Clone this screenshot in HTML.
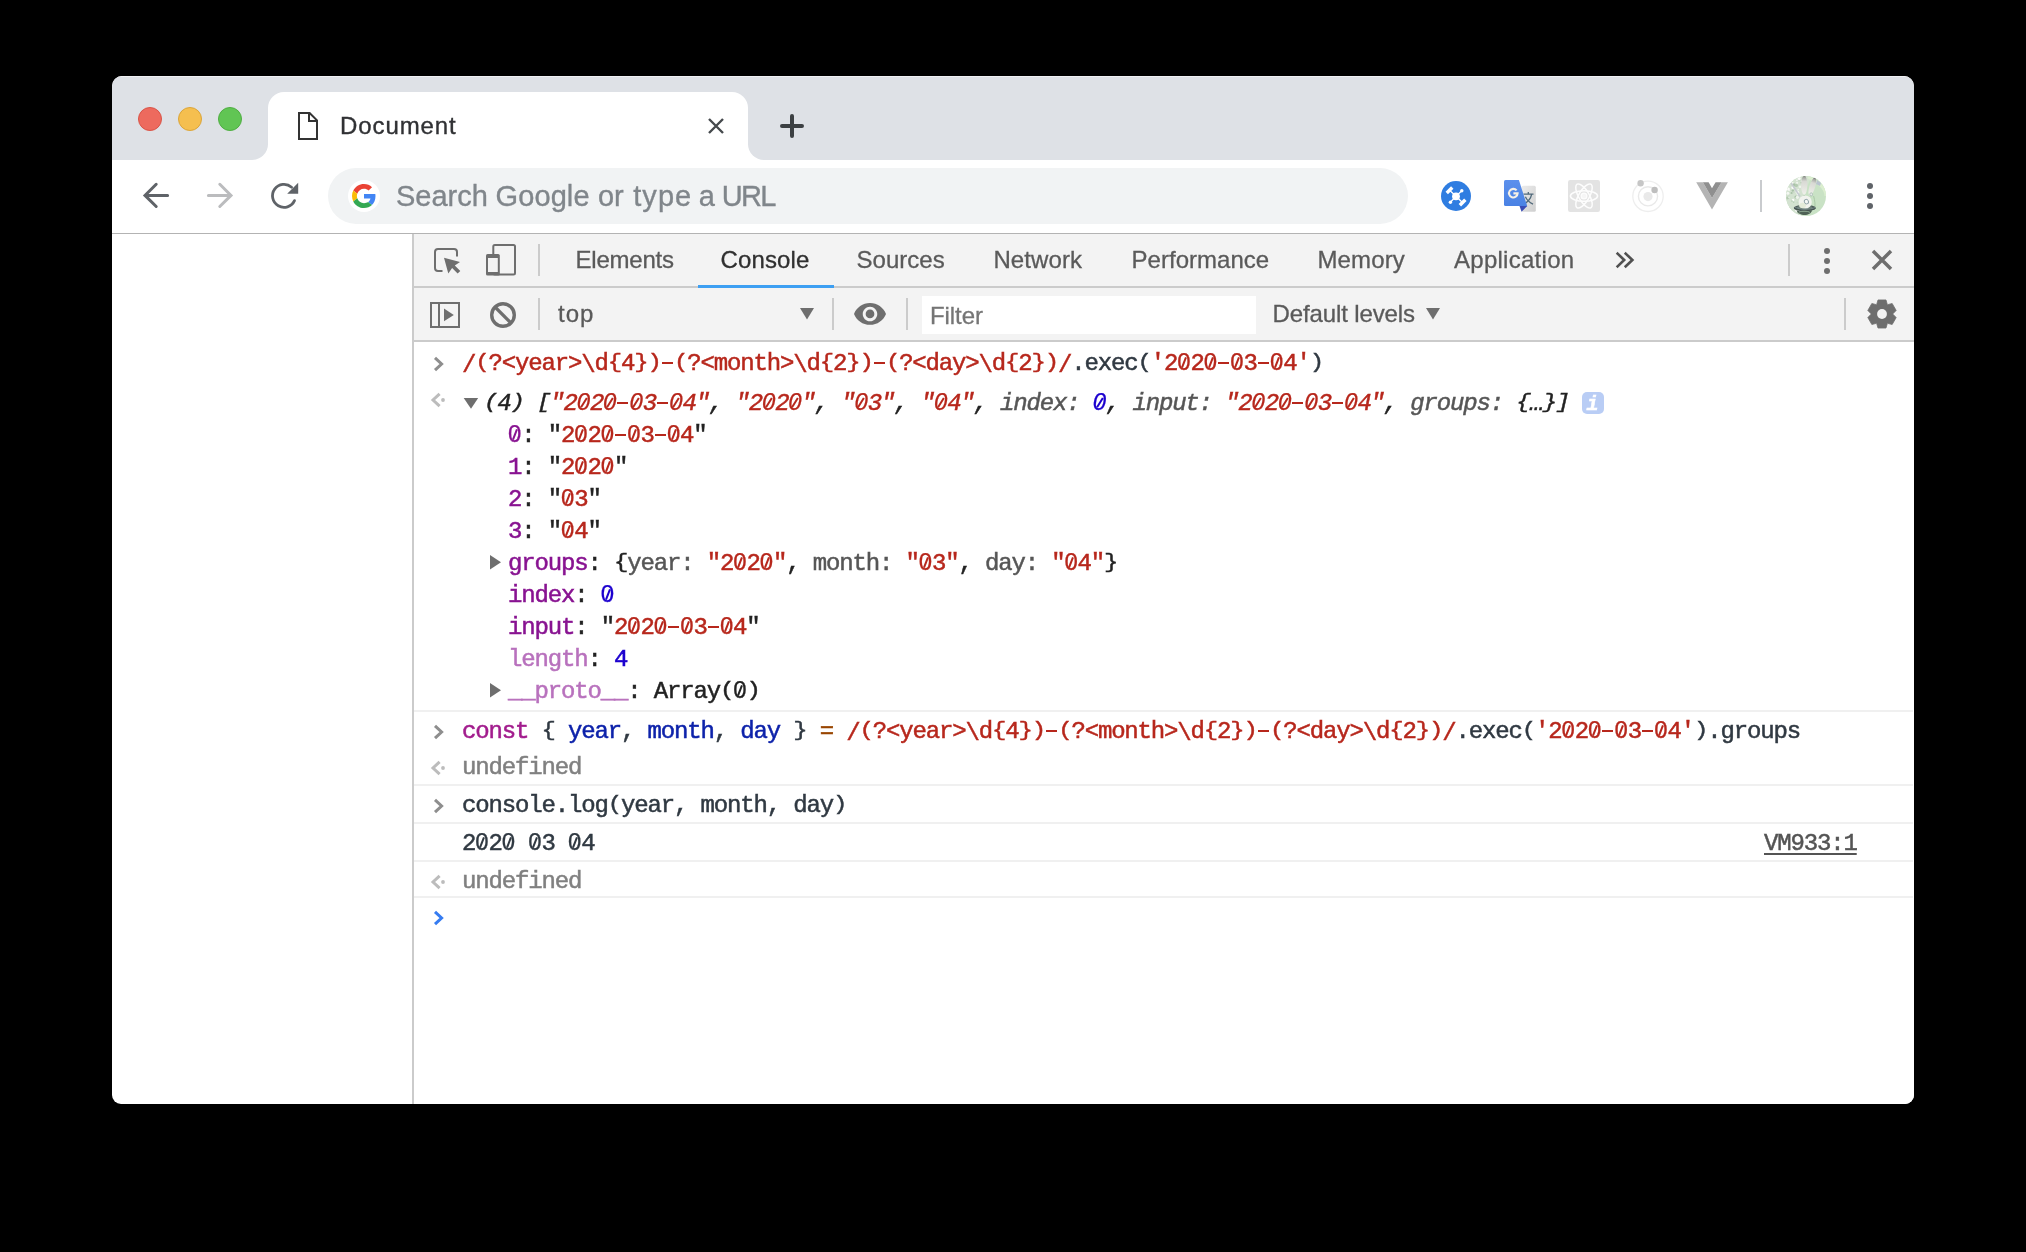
<!DOCTYPE html>
<html>
<head>
<meta charset="utf-8">
<title>Document</title>
<style>
html,body{margin:0;padding:0;background:#000;}
body{width:2026px;height:1252px;overflow:hidden;position:relative;font-family:"Liberation Sans",sans-serif;}
.abs{position:absolute;}
#win{position:absolute;left:112px;top:76px;width:1802px;height:1028px;border-radius:10px 10px 9px 9px;overflow:hidden;background:#fff;}
/* coordinates inside #win are page coords minus (112,76); use #page wrapper shifted */
#page{position:absolute;left:-112px;top:-76px;width:2026px;height:1252px;will-change:transform;}
#tabstrip{position:absolute;left:112px;top:76px;width:1802px;height:84px;background:#dee1e6;box-shadow:inset 0 1px 0 rgba(255,255,255,.55);}
#tab{position:absolute;left:268px;top:92px;width:480px;height:68px;background:#fff;border-radius:16px 16px 0 0;}
.flare{position:absolute;top:144px;width:16px;height:16px;background:#fff;}
.flare i{position:absolute;left:0;top:0;width:16px;height:16px;background:#dee1e6;display:block;}
#toolbar{position:absolute;left:112px;top:160px;width:1802px;height:73px;background:#fff;}
#tbline{position:absolute;left:112px;top:233px;width:1802px;height:1px;background:#b3b3b3;}
#omni{position:absolute;left:328px;top:168px;width:1080px;height:56px;border-radius:28px;background:#f1f3f4;}
.t{position:absolute;white-space:pre;line-height:1;}
.dot{position:absolute;width:24px;height:24px;border-radius:50%;top:107px;box-sizing:border-box;}
/* devtools */
#dt{position:absolute;left:414px;top:234px;width:1500px;height:870px;background:#fff;}
#dtborder{position:absolute;left:412px;top:234px;width:2px;height:870px;background:#cbcbcb;}
#dttabs{position:absolute;left:414px;top:234px;width:1500px;height:52px;background:#f3f3f3;}
.hline{position:absolute;left:414px;width:1500px;height:2px;background:#cbcbcb;}
#dttool{position:absolute;left:414px;top:288px;width:1500px;height:52px;background:#f3f3f3;}
.vsep{position:absolute;width:2px;height:32px;background:#cbcbcb;}
.lab{position:absolute;white-space:pre;font-size:24px;line-height:28px;color:#5a5a5a;-webkit-text-stroke:0.3px currentColor;}
.mono{position:absolute;white-space:pre;font-family:"Liberation Mono",monospace;font-size:24px;letter-spacing:-1.157px;line-height:32px;height:32px;color:#222;-webkit-text-stroke:0.5px currentColor;}
.hy{display:inline-block;width:11px;height:2px;margin:0 1.12px;background:currentColor;vertical-align:5.8px;}
.z{display:inline-block;position:relative;width:13.243px;text-align:center;letter-spacing:0;font-weight:normal;font-family:"Liberation Sans",sans-serif;font-size:24px;line-height:20px;-webkit-text-stroke:0.25px currentColor;}
.z::after{content:"";position:absolute;left:50%;top:50%;width:1.5px;height:11px;margin:-5.5px 0 0 -0.75px;background:currentColor;transform:rotate(21deg);}
.it .z::after{transform:rotate(32deg);}
.q{display:inline-block;text-decoration:none;transform-origin:0 22.4px;transform:translateY(-2px) scaleY(0.86);}
.sl{position:relative;top:2px;text-decoration:none;}
.sepl{position:absolute;left:414px;width:1499px;height:2px;background:#f0f0f0;}
.r{color:#b7271c}.p{color:#881391}.pd{color:#b871bd}.b{color:#1c00cf}.k{color:#a21c8d}.v{color:#0d22aa}.g{color:#808080}.d{color:#565656}.s{color:#303942}.o{color:#994500}
.it{font-style:italic}
svg{position:absolute;overflow:visible}
</style>
</head>
<body>
<div id="win"><div id="page">

<!-- ===== tab strip ===== -->
<div id="tabstrip"></div>
<div class="dot" style="left:138px;background:#ed6a5e;border:1px solid #d95448;"></div>
<div class="dot" style="left:178px;background:#f5bf4f;border:1px solid #dba53a;"></div>
<div class="dot" style="left:218px;background:#61c554;border:1px solid #4fae42;"></div>
<div class="flare" style="left:252px"><i style="border-radius:0 0 16px 0"></i></div>
<div class="flare" style="left:748px"><i style="border-radius:0 0 0 16px"></i></div>
<div id="tab"></div>
<svg style="left:0;top:0" width="2026" height="260" viewBox="0 0 2026 260">
<!-- favicon -->
<path d="M299,113 H309.6 L317,120.4 V139 H299 Z M309,113 V121 H317" fill="none" stroke="#333" stroke-width="2" stroke-linejoin="miter"/>
<!-- tab close -->
<path d="M709,119 L723,133 M723,119 L709,133" stroke="#45494d" stroke-width="2.4" fill="none"/>
<!-- new tab plus -->
<path d="M782,126 H802 M792,116 V136" stroke="#3c4043" stroke-width="4" stroke-linecap="round" fill="none"/>
</svg>
<div class="t" id="tabtitle" style="left:340px;top:112px;font-size:24px;line-height:28px;letter-spacing:0.9px;color:#303134;-webkit-text-stroke:0.35px currentColor;">Document</div>

<!-- ===== toolbar ===== -->
<div id="toolbar"></div>
<div id="omni"></div>
<svg style="left:0;top:0" width="2026" height="260" viewBox="0 0 2026 260">
<!-- back -->
<path d="M167.6,195.4 H145.5 M156.2,184.3 L145,195.4 L156.2,206.5" fill="none" stroke="#5f6368" stroke-width="3" stroke-linecap="round" stroke-linejoin="miter"/>
<!-- forward -->
<path d="M208.4,195.4 H230.5 M219.8,184.3 L231,195.4 L219.8,206.5" fill="none" stroke="#bbbcbe" stroke-width="3" stroke-linecap="round" stroke-linejoin="miter"/>
<!-- reload -->
<path d="M291.6,187.2 A11.5,11.5 0 1 0 294.5,200.6" fill="none" stroke="#5f6368" stroke-width="2.8" stroke-linecap="round"/>
<path d="M298.2,182.8 V193.8 H287.2 Z" fill="#5f6368"/>
<!-- google G -->
<circle cx="364" cy="196" r="16" fill="#fff"/>
<g transform="translate(352,184) scale(0.5)">
<path fill="#EA4335" d="M24 9.5c3.54 0 6.71 1.22 9.21 3.6l6.85-6.85C35.9 2.38 30.47 0 24 0 14.62 0 6.51 5.38 2.56 13.22l7.98 6.19C12.43 13.72 17.74 9.5 24 9.5z"/>
<path fill="#4285F4" d="M46.98 24.55c0-1.57-.15-3.09-.38-4.55H24v9.02h12.94c-.58 2.96-2.26 5.48-4.78 7.18l7.73 6c4.51-4.18 7.09-10.36 7.09-17.65z"/>
<path fill="#FBBC05" d="M10.53 28.59c-.48-1.45-.76-2.99-.76-4.59s.27-3.14.76-4.59l-7.98-6.19C.92 16.46 0 20.12 0 24c0 3.88.92 7.54 2.56 10.78l7.97-6.19z"/>
<path fill="#34A853" d="M24 48c6.48 0 11.93-2.13 15.89-5.81l-7.73-6c-2.15 1.45-4.92 2.3-8.16 2.3-6.26 0-11.57-4.22-13.47-9.91l-7.98 6.19C6.51 42.62 14.62 48 24 48z"/>
</g>
<!-- ext1: blue circle -->
<circle cx="1456" cy="196" r="15" fill="#2f7de1"/>
<g stroke="#fff" stroke-width="1.3" fill="#fff">
<path d="M1456,196.3 L1449.6,190.2 M1456,196.3 L1461.8,190.8 M1456,196.3 L1450.4,202.2 M1456,196.3 L1462.4,202.5" fill="none"/>
<circle cx="1456" cy="196.3" r="3.9" stroke="none"/>
<circle cx="1461.8" cy="190.8" r="1.7" stroke="none"/>
<circle cx="1450.4" cy="202.2" r="1.7" stroke="none"/>
<rect x="-3.9" y="-1.7" width="7.8" height="3.4" transform="translate(1449.5,190.2) rotate(-45)" stroke="none"/>
<rect x="-3.9" y="-1.7" width="7.8" height="3.4" transform="translate(1462.6,202.5) rotate(-45)" stroke="none"/>
</g>
<!-- ext2: translate -->
<defs>
<linearGradient id="gtg" x1="0" y1="0" x2="1" y2="1"><stop offset="0" stop-color="#ececec"/><stop offset="1" stop-color="#cfcfcf"/></linearGradient>
<linearGradient id="gtb" x1="0" y1="0" x2="0" y2="1"><stop offset="0" stop-color="#5c90ec"/><stop offset="1" stop-color="#4a82e4"/></linearGradient>
<linearGradient id="ear" x1="0" y1="0" x2="0" y2="1"><stop offset="0" stop-color="#585a57"/><stop offset="0.1" stop-color="#a3a5a0"/><stop offset="0.3" stop-color="#d8d9d4"/><stop offset="1" stop-color="#f0f1eb"/></linearGradient>
<clipPath id="avc"><circle cx="1806" cy="196" r="20"/></clipPath>
</defs>
<rect x="1521.5" y="185.7" width="14.3" height="26" rx="1.5" fill="url(#gtg)"/>
<g stroke="#50697a" stroke-width="1.3" fill="none"><path d="M1523.5,194.2 H1533.5 M1528.3,192 V194.2 M1531.6,194.4 C1530.8,198.6 1527.5,202.2 1523.8,204.2 M1525.4,196.8 C1526.8,200 1530,202.8 1533,204.2"/></g>
<path d="M1519.5,206 H1527.3 L1521.6,211.8 Z" fill="#3a4cb5"/>
<path d="M1505.5,180 H1518.9 L1527.2,206 H1505.5 Q1504,206 1504,204.5 V181.5 Q1504,180 1505.5,180 Z" fill="url(#gtb)"/>
<path d="M1516.6,190.4 A4.3,4.3 0 1 0 1517.6,193.4 H1513.4" fill="none" stroke="#f7f1e6" stroke-width="2.1"/>
<!-- ext3: react gray -->
<rect x="1568" y="180" width="32" height="32" rx="2.2" fill="#e3e3e3"/>
<g fill="none" stroke="#fdfdfd" stroke-width="1.5">
<ellipse cx="1584" cy="196" rx="13.6" ry="5.3"/>
<ellipse cx="1584" cy="196" rx="13.6" ry="5.3" transform="rotate(60 1584 196)"/>
<ellipse cx="1584" cy="196" rx="13.6" ry="5.3" transform="rotate(120 1584 196)"/>
<circle cx="1584" cy="196" r="2.9" stroke-width="1.3" fill="#f6f6f6"/>
</g>
<!-- ext4: ring -->
<circle cx="1648" cy="196.3" r="15.2" fill="none" stroke="#eeeeee" stroke-width="1.3"/>
<circle cx="1648" cy="196.3" r="9.6" fill="none" stroke="#e9e9e9" stroke-width="1.4"/>
<circle cx="1648" cy="196.6" r="4.6" fill="#e9e9e9"/>
<circle cx="1640.6" cy="183.3" r="3.2" fill="#c6c6c6"/>
<circle cx="1654.6" cy="190" r="3.2" fill="#bebebe"/>
<!-- ext5: vue gray -->
<path d="M1696.2,182.2 H1702.9 L1712,198 L1721.5,182.2 H1727.9 L1712,209.6 Z" fill="#b4b4b4"/>
<path d="M1702.9,182.2 H1708.6 L1712,188.2 L1715.6,182.2 H1721.5 L1712,198 Z" fill="#8f8f8f"/>
<!-- avatar -->
<g clip-path="url(#avc)">
<rect x="1786" y="176" width="40" height="40" fill="#c9e2c5"/>
<path d="M1786,176 H1812 C1806,186 1804,200 1800,216 H1786 Z" fill="#d3e2d0"/>
<circle cx="1792.5" cy="183.4" r="1.4" fill="#f4f7f2"/><circle cx="1802.4" cy="181.4" r="1.3" fill="#eef3ec"/><circle cx="1790.3" cy="181.1" r="1.1" fill="#fbfcfa"/><circle cx="1787.8" cy="193.3" r="1.5" fill="#f4f7f2"/><circle cx="1804.9" cy="200.7" r="1.3" fill="#f4f7f2"/><circle cx="1797.5" cy="192.3" r="1.7" fill="#f4f7f2"/><circle cx="1797.1" cy="182.8" r="1.1" fill="#eef3ec"/><circle cx="1788.4" cy="189.1" r="1.5" fill="#fbfcfa"/><circle cx="1788.1" cy="198.6" r="0.9" fill="#f4f7f2"/><circle cx="1797.0" cy="180.3" r="0.8" fill="#fbfcfa"/><circle cx="1795.9" cy="197.1" r="1.5" fill="#a9c2a8"/><circle cx="1797.7" cy="194.3" r="1.0" fill="#fbfcfa"/><circle cx="1800.0" cy="186.8" r="1.3" fill="#eef3ec"/><circle cx="1795.9" cy="190.4" r="1.1" fill="#eef3ec"/><circle cx="1805.6" cy="182.3" r="1.1" fill="#b4cbb1"/><circle cx="1789.0" cy="195.6" r="0.7" fill="#c9d9c7"/><circle cx="1787.6" cy="198.1" r="1.5" fill="#b4cbb1"/><circle cx="1792.8" cy="190.6" r="1.2" fill="#a9c2a8"/><circle cx="1787.4" cy="181.4" r="1.0" fill="#c9d9c7"/><circle cx="1799.3" cy="180.2" r="1.4" fill="#c9d9c7"/><circle cx="1797.6" cy="202.5" r="1.1" fill="#c9d9c7"/><circle cx="1793.7" cy="202.1" r="0.7" fill="#a9c2a8"/><circle cx="1793.1" cy="200.0" r="1.2" fill="#fbfcfa"/><circle cx="1801.4" cy="182.7" r="0.9" fill="#a9c2a8"/><circle cx="1804.3" cy="195.9" r="0.9" fill="#a9c2a8"/><circle cx="1797.0" cy="209.8" r="1.5" fill="#eef3ec"/><circle cx="1791.6" cy="193.0" r="1.1" fill="#a9c2a8"/><circle cx="1805.2" cy="183.4" r="0.9" fill="#fbfcfa"/><circle cx="1799.2" cy="178.4" r="1.5" fill="#fbfcfa"/><circle cx="1791.3" cy="178.1" r="1.1" fill="#b4cbb1"/><circle cx="1798.2" cy="189.5" r="0.8" fill="#eef3ec"/><circle cx="1805.0" cy="201.6" r="1.4" fill="#a9c2a8"/><circle cx="1804.0" cy="206.1" r="1.6" fill="#eef3ec"/><circle cx="1793.8" cy="192.4" r="0.8" fill="#c9d9c7"/><circle cx="1794.0" cy="184.9" r="1.7" fill="#a9c2a8"/><circle cx="1789.2" cy="190.2" r="0.8" fill="#f4f7f2"/><circle cx="1797.3" cy="197.3" r="1.6" fill="#eef3ec"/><circle cx="1786.5" cy="209.5" r="1.3" fill="#fbfcfa"/><circle cx="1798.7" cy="212.4" r="1.3" fill="#a9c2a8"/><circle cx="1788.5" cy="208.6" r="1.7" fill="#a9c2a8"/><circle cx="1795.6" cy="189.2" r="0.8" fill="#c9d9c7"/><circle cx="1792.9" cy="187.5" r="1.5" fill="#fbfcfa"/><circle cx="1796.3" cy="185.4" r="1.7" fill="#b4cbb1"/><circle cx="1788.9" cy="197.6" r="0.7" fill="#eef3ec"/><circle cx="1792.0" cy="201.1" r="0.8" fill="#b4cbb1"/><circle cx="1796.4" cy="210.7" r="1.1" fill="#fbfcfa"/>
<path d="M1808,177 C1820,183 1826,190 1826,196" fill="none" stroke="#dbeecf" stroke-width="3"/>
<path d="M1817,180 l4,3 -1,3 -4,-2 z" fill="#b9c3cf"/>
<path d="M1791,183 L1800,196.5" stroke="#c6cbd0" stroke-width="1.6"/>
<ellipse cx="1804.2" cy="185.2" rx="3.1" ry="9.6" fill="url(#ear)"/>
<ellipse cx="1812.3" cy="186.6" rx="2.9" ry="9.4" fill="url(#ear)" transform="rotate(17 1812.3 186.6)"/>
<path d="M1813.6,196 C1815,201 1815.4,205 1814.6,209" fill="none" stroke="#a9c9a6" stroke-width="1"/>
<ellipse cx="1804.8" cy="208" rx="11" ry="3.3" fill="#4c5a59"/><ellipse cx="1804.6" cy="207.4" rx="8" ry="2" fill="#6d8078"/><ellipse cx="1805.2" cy="202" rx="6.6" ry="6.6" fill="#f1f3ee"/>
<ellipse cx="1802.6" cy="205.5" rx="3.4" ry="2.8" fill="#e4ebd9"/>
<ellipse cx="1806.4" cy="201.6" rx="2" ry="2.3" fill="#f6f8f6" stroke="#8fa2a6" stroke-width="0.9" transform="rotate(-30 1806.4 201.6)"/>
<ellipse cx="1811.2" cy="194.4" rx="1.3" ry="1.6" fill="#e9efe9" stroke="#9fb0ae" stroke-width="0.7"/>
<path d="M1793.8,207.6 C1794,212 1816,212 1815.8,207.8 C1812,210.2 1799,210.4 1793.8,207.6 Z" fill="#46544f"/>
<path d="M1796.5,210 C1798,216.4 1811,216.8 1812,210.2 C1808,212 1800,212 1796.5,210 Z" fill="#4f6255"/>
<path d="M1799,212 C1802,210.8 1807,210.8 1810,212.4" fill="none" stroke="#86a08c" stroke-width="1"/>
<path d="M1795,207.2 C1800,210 1810,210 1815.4,207.4" fill="none" stroke="#7d9092" stroke-width="0.8"/>
</g>
<!-- separator -->
<rect x="1760" y="180" width="2" height="32" fill="#c9cbce"/>
<!-- kebab -->
<circle cx="1870" cy="186" r="3" fill="#5f6368"/><circle cx="1870" cy="196" r="3" fill="#5f6368"/><circle cx="1870" cy="206" r="3" fill="#5f6368"/>
</svg>
<div class="t" style="left:395.9px;top:179px;font-size:29px;line-height:34px;color:#80868b;-webkit-text-stroke:0.35px currentColor;letter-spacing:0.01px">Search</div><div class="t" style="left:495.6px;top:179px;font-size:29px;line-height:34px;color:#80868b;-webkit-text-stroke:0.35px currentColor;letter-spacing:0.08px">Google</div><div class="t" style="left:597.9px;top:179px;font-size:29px;line-height:34px;color:#80868b;-webkit-text-stroke:0.35px currentColor;letter-spacing:0px">or</div><div class="t" style="left:633.2px;top:179px;font-size:29px;line-height:34px;color:#80868b;-webkit-text-stroke:0.35px currentColor;letter-spacing:1.07px">type</div><div class="t" style="left:698.8px;top:179px;font-size:29px;line-height:34px;color:#80868b;-webkit-text-stroke:0.35px currentColor;letter-spacing:0px">a</div><div class="t" style="left:721.7px;top:179px;font-size:29px;line-height:34px;color:#80868b;-webkit-text-stroke:0.35px currentColor;letter-spacing:-1.7px">URL</div>
<div id="tbline"></div>

<!-- ===== devtools ===== -->
<div id="dt"></div>
<div id="dtborder"></div>
<div id="dttabs"></div>
<div class="hline" style="top:286px"></div>
<div id="dttool"></div>
<div class="hline" style="top:340px"></div>
<svg style="left:0;top:0" width="2026" height="360" viewBox="0 0 2026 360">
<!-- inspect -->
<path d="M457,256.5 V252 Q457,249 454,249 H438 Q435,249 435,252 V268 Q435,271 438,271 H442.5" fill="none" stroke="#6e6e6e" stroke-width="2"/>
<path d="M444,257.8 L460,262 L454.8,265.4 L460.3,270.9 L457.6,273.6 L452.1,268.1 L448.3,273.4 Z" fill="#6e6e6e"/>
<!-- device -->
<rect x="493.3" y="245" width="21.7" height="29.5" rx="1.5" fill="none" stroke="#6e6e6e" stroke-width="2"/>
<rect x="486" y="254" width="13.8" height="21.6" rx="1.6" fill="#6e6e6e"/>
<rect x="488" y="258" width="9.8" height="14" fill="#f3f3f3"/>
<rect x="538" y="244" width="2" height="32" fill="#cbcbcb"/>
<!-- >> -->
<path d="M1617.6,253.6 L1624.2,260 L1617.6,266.4 M1625.7,253.6 L1632.4,260 L1625.7,266.4" fill="none" stroke="#505050" stroke-width="2.6" stroke-linecap="square" stroke-linejoin="miter"/>
<rect x="1788" y="244" width="2" height="32" fill="#cbcbcb"/>
<!-- kebab -->
<circle cx="1827" cy="251" r="3" fill="#6e6e6e"/><circle cx="1827" cy="261" r="3" fill="#6e6e6e"/><circle cx="1827" cy="271" r="3" fill="#6e6e6e"/>
<!-- close -->
<path d="M1873,251 L1891,269 M1891,251 L1873,269" stroke="#6e6e6e" stroke-width="3.5" fill="none"/>
<!-- tab underline -->
<rect x="698" y="285" width="136" height="3" fill="#3d9ff2"/>
<!-- sidebar play -->
<rect x="431" y="303" width="28" height="24" fill="none" stroke="#6e6e6e" stroke-width="2"/>
<rect x="438" y="303" width="2" height="24" fill="#6e6e6e"/>
<path d="M444,308.6 V321.2 L453.8,314.9 Z" fill="#6e6e6e"/>
<!-- clear -->
<circle cx="503" cy="315" r="11.3" fill="none" stroke="#6e6e6e" stroke-width="3.4"/>
<path d="M495,307 L511,323" stroke="#6e6e6e" stroke-width="3.2"/>
<rect x="538" y="298" width="2" height="32" fill="#cbcbcb"/>
<!-- dropdown triangle -->
<path d="M800,308 H814 L807,319.6 Z" fill="#6e6e6e"/>
<rect x="832" y="298" width="2" height="32" fill="#cbcbcb"/>
<!-- eye -->
<g transform="translate(852.55,296.45) scale(1.4545)"><path fill="#6e6e6e" d="M12 4.5C7 4.5 2.73 7.61 1 12c1.73 4.39 6 7.5 11 7.5s9.27-3.11 11-7.5c-1.73-4.39-6-7.5-11-7.5zM12 17c-2.76 0-5-2.24-5-5s2.24-5 5-5 5 2.24 5 5-2.24 5-5 5zm0-8c-1.66 0-3 1.34-3 3s1.34 3 3 3 3-1.34 3-3-1.34-3-3-3z"/></g>
<rect x="906" y="298" width="2" height="32" fill="#cbcbcb"/>
<!-- filter box -->
<rect x="922" y="296" width="334" height="38" fill="#fff"/>
<!-- levels triangle -->
<path d="M1426,308 H1440 L1433,319.6 Z" fill="#6e6e6e"/>
<rect x="1844" y="298" width="2" height="32" fill="#cbcbcb"/>
<!-- gear -->
<path d="M1887.30,304.48 L1886.00,299.96 L1878.00,299.96 L1876.70,304.48 L1876.40,304.65 L1871.84,303.52 L1867.84,310.44 L1871.10,313.83 L1871.10,314.17 L1867.84,317.56 L1871.84,324.48 L1876.40,323.35 L1876.70,323.52 L1878.00,328.04 L1886.00,328.04 L1887.30,323.52 L1887.60,323.35 L1892.16,324.48 L1896.16,317.56 L1892.90,314.17 L1892.90,313.83 L1896.16,310.44 L1892.16,303.52 L1887.60,304.65 Z" fill="#6e6e6e" stroke="#6e6e6e" stroke-width="0.8" stroke-linejoin="round"/>
<circle cx="1882" cy="314" r="4.9" fill="#f3f3f3"/>
</svg>
<div class="lab" style="left:575.5px;top:246px;letter-spacing:-0.22px">Elements</div>
<div class="lab" style="left:720.5px;top:246px;letter-spacing:0.13px;color:#303030">Console</div>
<div class="lab" style="left:856.6px;top:246px;letter-spacing:0.01px">Sources</div>
<div class="lab" style="left:993.4px;top:246px;letter-spacing:0.1px">Network</div>
<div class="lab" style="left:1131.5px;top:246px;letter-spacing:0.03px">Performance</div>
<div class="lab" style="left:1317.5px;top:246px;letter-spacing:0.13px">Memory</div>
<div class="lab" style="left:1454px;top:246px;letter-spacing:0.27px">Application</div>
<div class="lab" style="left:558px;top:300px;letter-spacing:0.99px">top</div>
<div class="lab" style="left:930px;top:302px;letter-spacing:-0.07px;color:#757575">Filter</div>
<div class="lab" style="left:1272.6px;top:300px;letter-spacing:-0.13px">Default levels</div>

<div class="sepl" style="top:710px"></div><div class="sepl" style="top:784px"></div><div class="sepl" style="top:822px"></div><div class="sepl" style="top:860px"></div><div class="sepl" style="top:896px"></div>
<div class="mono " style="left:462px;top:348px"><span class="r"><u class="sl">/</u><u class="q">(</u>?&lt;year&gt;<u class="sl">\</u>d<u class="q">{</u>4<u class="q">}</u><u class="q">)</u><i class="hy"></i><u class="q">(</u>?&lt;month&gt;<u class="sl">\</u>d<u class="q">{</u>2<u class="q">}</u><u class="q">)</u><i class="hy"></i><u class="q">(</u>?&lt;day&gt;<u class="sl">\</u>d<u class="q">{</u>2<u class="q">}</u><u class="q">)</u><u class="sl">/</u></span><span class="s">.exec<u class="q">(</u></span><span class="r">'2<b class="z">0</b>2<b class="z">0</b><i class="hy"></i><b class="z">0</b>3<i class="hy"></i><b class="z">0</b>4'</span><span class="s"><u class="q">)</u></span></div>
<div class="mono it" style="left:484px;top:388px;letter-spacing:-1.172px"><u class="q">(</u>4<u class="q">)</u> <u class="q">[</u><span class="r">"2<b class="z">0</b>2<b class="z">0</b><i class="hy"></i><b class="z">0</b>3<i class="hy"></i><b class="z">0</b>4"</span>, <span class="r">"2<b class="z">0</b>2<b class="z">0</b>"</span>, <span class="r">"<b class="z">0</b>3"</span>, <span class="r">"<b class="z">0</b>4"</span>, <span class="d">index: </span><span class="b"><b class="z">0</b></span>, <span class="d">input: </span><span class="r">"2<b class="z">0</b>2<b class="z">0</b><i class="hy"></i><b class="z">0</b>3<i class="hy"></i><b class="z">0</b>4"</span>, <span class="d">groups: </span><u class="q">{</u>…<u class="q">}</u><u class="q">]</u></div>
<div class="mono " style="left:508px;top:420px"><span class="p"><b class="z">0</b></span>: "<span class="r">2<b class="z">0</b>2<b class="z">0</b><i class="hy"></i><b class="z">0</b>3<i class="hy"></i><b class="z">0</b>4</span>"</div>
<div class="mono " style="left:508px;top:452px"><span class="p">1</span>: "<span class="r">2<b class="z">0</b>2<b class="z">0</b></span>"</div>
<div class="mono " style="left:508px;top:484px"><span class="p">2</span>: "<span class="r"><b class="z">0</b>3</span>"</div>
<div class="mono " style="left:508px;top:516px"><span class="p">3</span>: "<span class="r"><b class="z">0</b>4</span>"</div>
<div class="mono " style="left:508px;top:548px"><span class="p">groups</span>: <u class="q">{</u><span class="d">year: </span><span class="r">"2<b class="z">0</b>2<b class="z">0</b>"</span>, <span class="d">month: </span><span class="r">"<b class="z">0</b>3"</span>, <span class="d">day: </span><span class="r">"<b class="z">0</b>4"</span><u class="q">}</u></div>
<div class="mono " style="left:508px;top:580px"><span class="p">index</span>: <span class="b"><b class="z">0</b></span></div>
<div class="mono " style="left:508px;top:612px"><span class="p">input</span>: "<span class="r">2<b class="z">0</b>2<b class="z">0</b><i class="hy"></i><b class="z">0</b>3<i class="hy"></i><b class="z">0</b>4</span>"</div>
<div class="mono " style="left:508px;top:644px"><span class="pd">length</span>: <span class="b">4</span></div>
<div class="mono " style="left:508px;top:676px"><span class="pd">__proto__</span>: Array<u class="q">(</u><b class="z">0</b><u class="q">)</u></div>
<div class="mono " style="left:462px;top:716px"><span class="k">const</span><span class="s"> <u class="q">{</u> </span><span class="v">year</span><span class="s">, </span><span class="v">month</span><span class="s">, </span><span class="v">day</span><span class="s"> <u class="q">}</u> </span><span class="o">=</span> <span class="r"><u class="sl">/</u><u class="q">(</u>?&lt;year&gt;<u class="sl">\</u>d<u class="q">{</u>4<u class="q">}</u><u class="q">)</u><i class="hy"></i><u class="q">(</u>?&lt;month&gt;<u class="sl">\</u>d<u class="q">{</u>2<u class="q">}</u><u class="q">)</u><i class="hy"></i><u class="q">(</u>?&lt;day&gt;<u class="sl">\</u>d<u class="q">{</u>2<u class="q">}</u><u class="q">)</u><u class="sl">/</u></span><span class="s">.exec<u class="q">(</u></span><span class="r">'2<b class="z">0</b>2<b class="z">0</b><i class="hy"></i><b class="z">0</b>3<i class="hy"></i><b class="z">0</b>4'</span><span class="s"><u class="q">)</u>.groups</span></div>
<div class="mono " style="left:462px;top:752px"><span class="g">undefined</span></div>
<div class="mono " style="left:462px;top:790px"><span class="s">console.log<u class="q">(</u>year, month, day<u class="q">)</u></span></div>
<div class="mono " style="left:462px;top:828px"><span class="s">2<b class="z">0</b>2<b class="z">0</b> <b class="z">0</b>3 <b class="z">0</b>4</span></div>
<div class="mono " style="left:1764px;top:828px"><span style="color:#545454;text-decoration:underline;text-decoration-thickness:2px;text-underline-offset:3px">VM933:1</span></div>
<div class="mono " style="left:462px;top:866px"><span class="g">undefined</span></div>
<svg style="left:0;top:0" width="2026" height="1252" viewBox="0 0 2026 1252"><path d="M435,357.8 L441.6,364 L435,370.2" fill="none" stroke="#8e8e8e" stroke-width="3" stroke-linejoin="miter"/><path d="M439.6,393.8 L433,400 L439.6,406.2" fill="none" stroke="#bcbcbc" stroke-width="3" stroke-linejoin="miter"/><circle cx="443" cy="400" r="1.9" fill="#bcbcbc"/><path d="M435,725.8 L441.6,732 L435,738.2" fill="none" stroke="#8e8e8e" stroke-width="3" stroke-linejoin="miter"/><path d="M439.6,761.8 L433,768 L439.6,774.2" fill="none" stroke="#bcbcbc" stroke-width="3" stroke-linejoin="miter"/><circle cx="443" cy="768" r="1.9" fill="#bcbcbc"/><path d="M435,799.8 L441.6,806 L435,812.2" fill="none" stroke="#8e8e8e" stroke-width="3" stroke-linejoin="miter"/><path d="M439.6,875.8 L433,882 L439.6,888.2" fill="none" stroke="#bcbcbc" stroke-width="3" stroke-linejoin="miter"/><circle cx="443" cy="882" r="1.9" fill="#bcbcbc"/><path d="M435,911.8 L441.6,918 L435,924.2" fill="none" stroke="#367cf1" stroke-width="3" stroke-linejoin="miter"/><path d="M463.7,398 H478.2 L471,408.8 Z" fill="#6e6e6e"/><path d="M490,555 V569.4 L501,562.2 Z" fill="#6e6e6e"/><path d="M490,683 V697.4 L501,690.2 Z" fill="#6e6e6e"/><rect x="1582" y="392" width="22" height="22" rx="5" fill="#b9cdf5"/></svg><div class="mono it" style="left:1586.5px;top:389px;color:#fff;font-size:20px;letter-spacing:0;font-weight:bold">i</div>

</div></div>
</body>
</html>
